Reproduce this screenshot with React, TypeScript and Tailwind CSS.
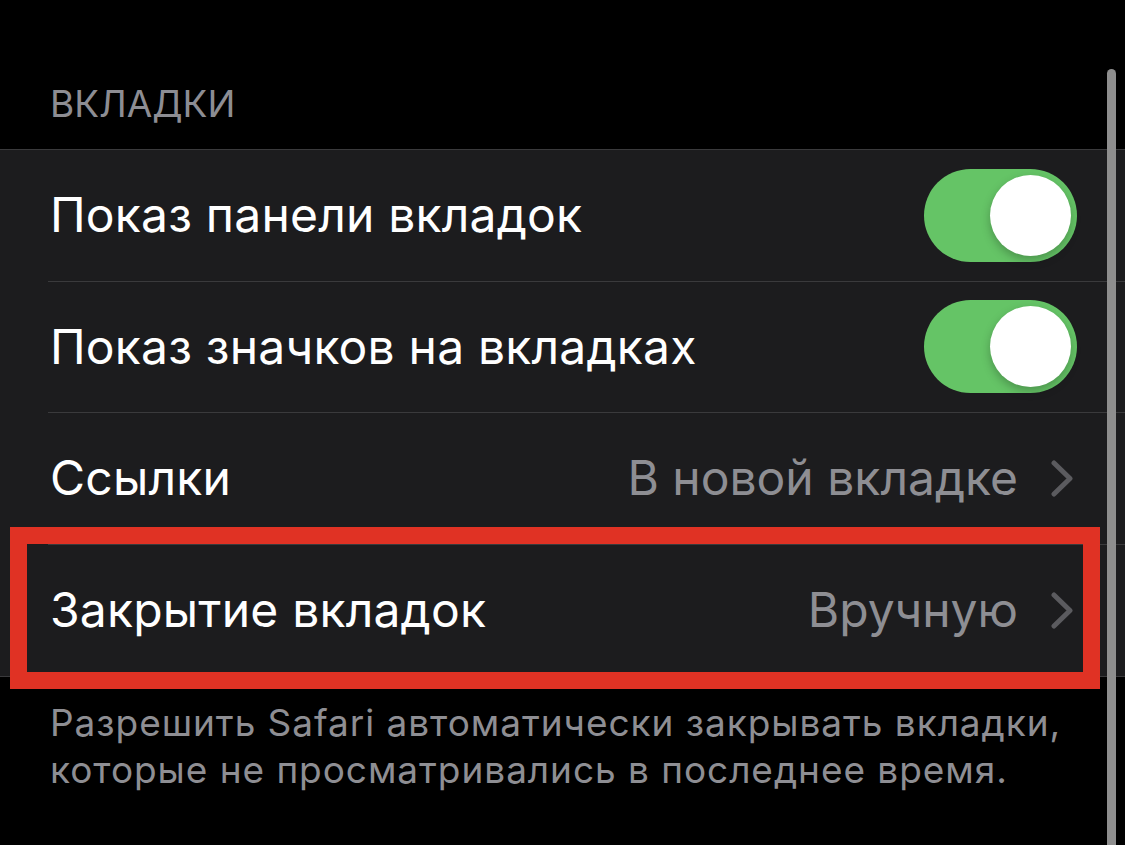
import React from 'react'

type Row =
    | { kind: 'toggle'; label: string; on: boolean }
    | { kind: 'link'; label: string; value: string }

const ROWS: Row[] = [
    { kind: 'toggle', label: 'Показ панели вкладок', on: true },
    { kind: 'toggle', label: 'Показ значков на вкладках', on: true },
    { kind: 'link', label: 'Ссылки', value: 'В новой вкладке' },
    { kind: 'link', label: 'Закрытие вкладок', value: 'Вручную' },
]

function Toggle({ on }: { on: boolean }) {
    return (
        <div
            className={`relative w-[153px] h-[93px] rounded-full shrink-0 ${
                on ? 'bg-[#65c466]' : 'bg-[#39393d]'
            }`}
        >
            <div
                className={`absolute top-[6px] w-[81px] h-[81px] rounded-full bg-white shadow-[0_4px_10px_rgba(0,0,0,0.25)] ${
                    on ? 'right-[6px]' : 'left-[6px]'
                }`}
            />
        </div>
    )
}

function Chevron() {
    return (
        <svg width="24" height="37" viewBox="0 0 24 37" className="shrink-0">
            <path
                d="M4 3 L20 18.5 L4 34"
                fill="none"
                stroke="#5b5b5f"
                strokeWidth="5"
                strokeLinecap="round"
                strokeLinejoin="round"
            />
        </svg>
    )
}

function SettingsRow({ row, last }: { row: Row; last: boolean }) {
    return (
        <div className="h-[131.5px] pl-[48px]">
            <div
                className={`h-full flex items-center pl-[2px] ${
                    row.kind === 'toggle' ? 'pr-[48px]' : 'pr-[51px]'
                } ${last ? '' : 'border-b border-[#3a3a3c]'}`}
            >
                <span className="flex-1 text-[48px] leading-none text-white whitespace-nowrap tracking-[0.2px]">
                    {row.label}
                </span>
                {row.kind === 'toggle' ? (
                    <Toggle on={row.on} />
                ) : (
                    <div className="flex items-center gap-[32px]">
                        <span className="text-[48px] leading-none text-[#8e8e93] whitespace-nowrap">
                            {row.value}
                        </span>
                        <Chevron />
                    </div>
                )}
            </div>
        </div>
    )
}

export default function App() {
    return (
        <div className="relative w-[1125px] h-[845px] overflow-hidden bg-black font-['Inter','Noto_Sans',sans-serif] antialiased">
            <div className="h-[149px] flex items-end pl-[50px] pb-[27px]">
                <span className="text-[37px] leading-none text-[#8d8d93]">ВКЛАДКИ</span>
            </div>

            <div className="bg-[#1c1c1e] border-t border-b border-[#3a3a3c]">
                {ROWS.map((row, i) => (
                    <SettingsRow key={row.label} row={row} last={i === ROWS.length - 1} />
                ))}
            </div>

            <p className="pl-[50px] pr-[40px] pt-[22px] text-[37px] leading-[47px] tracking-[0.95px] text-[#8e8e93] whitespace-nowrap">
                Разрешить Safari автоматически закрывать вкладки,
                <br />
                которые не просматривались в последнее время.
            </p>

            {/* highlight frame round the tab-closing row */}
            <div className="absolute left-[10px] top-[527px] w-[1090px] h-[162px] border-[17px] border-[#e03224]" />

            {/* scroll indicator */}
            <div className="absolute right-[9px] top-[69px] bottom-0 w-[9px] rounded-t-full bg-[#8e8e8e]" />
        </div>
    )
}
